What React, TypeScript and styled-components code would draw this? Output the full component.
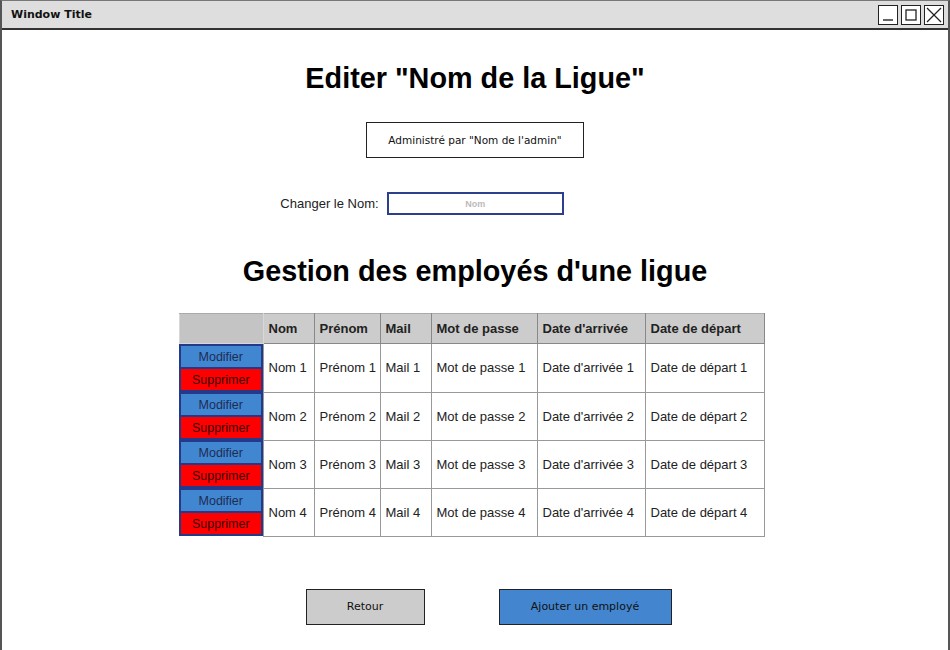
import React from "react";
import styled, { createGlobalStyle } from "styled-components";

const Global = createGlobalStyle`
  html, body { margin: 0; padding: 0; background: #fff; }
  body { font-family: "Liberation Sans", Arial, sans-serif; }
  * { box-sizing: border-box; }
`;

const Sketch = `"DejaVu Sans", "Liberation Sans", sans-serif`;

const Window = styled.div`
  width: 950px;
  height: 650px;
  border-left: 2px solid #555;
  border-right: 2px solid #555;
  border-top: 1px solid #777;
  display: flex;
  flex-direction: column;
  overflow: hidden;
`;

const TitleBar = styled.div`
  height: 29px;
  flex: none;
  background: #dedede;
  border-bottom: 2px solid #333;
  display: flex;
  align-items: center;
  justify-content: space-between;
  padding: 0 4px 0 9px;
`;

const TitleText = styled.span`
  font-family: ${Sketch};
  font-weight: bold;
  font-size: 11px;
  color: #111;
`;

const WinButtons = styled.div`
  display: flex;
  gap: 3px;
`;

const WinButton = styled.div`
  width: 20px;
  height: 20px;
  border: 1px solid #222;
  background: #fff;
  display: flex;
  align-items: center;
  justify-content: center;
`;

const Content = styled.div`
  flex: 1;
  display: flex;
  flex-direction: column;
  align-items: center;
`;

const Heading = styled.h1<{ $top: number }>`
  margin: ${(p) => p.$top}px 0 0;
  font-family: "Liberation Sans", Arial, sans-serif;
  font-weight: bold;
  font-size: 28.8px;
  line-height: 32px;
  color: #000;
`;

const AdminBox = styled.div`
  margin-top: 28px;
  width: 218px;
  height: 36px;
  border: 1px solid #222;
  display: flex;
  align-items: center;
  justify-content: center;
  font-family: ${Sketch};
  font-size: 10.5px;
  color: #111;
`;

const NameRow = styled.div`
  margin-top: 34px;
  display: flex;
  align-items: center;
  gap: 8px;
  margin-left: -106px;
`;

const Label = styled.span`
  font-size: 13px;
  color: #222;
`;

const NameInput = styled.div`
  width: 177px;
  height: 23px;
  border: 2px solid #2b3f8d;
  display: flex;
  align-items: center;
  justify-content: center;
  font-size: 9px;
  font-weight: bold;
  color: #bbb;
`;

const Table = styled.table`
  margin-top: 26px;
  margin-left: -7px;
  width: 585px;
  table-layout: fixed;
  border-collapse: collapse;
  font-family: "Liberation Sans", Arial, sans-serif;
  font-size: 13px;
  color: #222;
`;

const Th = styled.th<{ $w: number; $blank?: boolean }>`
  width: ${(p) => p.$w}px;
  height: 30px;
  padding: 0 3px 0 5px;
  text-align: left;
  font-weight: bold;
  white-space: nowrap;
  background: ${(p) => (p.$blank ? "#c4c4c4" : "#cccccc")};
  border: 1px solid ${(p) => (p.$blank ? "#d8d8d8" : "#888")};
  border-top: 1px solid #aaa;
`;

const Td = styled.td`
  height: 48px;
  padding: 0 3px 0 5px;
  border: 1px solid #999;
  white-space: nowrap;
  overflow: visible;
`;

const ActionTd = styled.td`
  padding: 0;
  height: 48px;
  border: none;
`;

const ActionStack = styled.div`
  display: flex;
  flex-direction: column;
  height: 48px;
  border: 2px solid #24398a;
  background: #24398a;
  gap: 2px;
`;

const ActionBtn = styled.div<{ $kind: "edit" | "delete" }>`
  flex: 1;
  display: flex;
  align-items: center;
  justify-content: center;
  font-size: 12.5px;
  color: ${(p) => (p.$kind === "edit" ? "#1d2d55" : "#3a0000")};
  background: ${(p) => (p.$kind === "edit" ? "#4186d0" : "#ff0000")};
`;

const Footer = styled.div`
  margin-top: 52px;
  display: flex;
  gap: 74px;
  margin-left: 27px;
`;

const FootButton = styled.div<{ $w: number; $primary?: boolean }>`
  width: ${(p) => p.$w}px;
  height: 36px;
  border: 1px solid #222;
  background: ${(p) => (p.$primary ? "#4386cf" : "#cccccc")};
  display: flex;
  align-items: center;
  justify-content: center;
  font-family: ${Sketch};
  font-size: 11px;
  color: #111;
`;

const cols: [string, number][] = [
  ["Nom", 51],
  ["Prénom", 66],
  ["Mail", 51],
  ["Mot de passe", 106],
  ["Date d'arrivée", 108],
  ["Date de départ", 119],
];

const rows = [1, 2, 3, 4];

export default function App() {
  return (
    <>
      <Global />
      <Window>
        <TitleBar>
          <TitleText>Window Title</TitleText>
          <WinButtons>
            <WinButton>
              <svg width="14" height="14" viewBox="0 0 14 14">
                <line x1="2" y1="12" x2="12" y2="12" stroke="#222" strokeWidth="1.4" />
              </svg>
            </WinButton>
            <WinButton>
              <svg width="14" height="14" viewBox="0 0 14 14">
                <rect x="2" y="2" width="10" height="10" fill="none" stroke="#222" strokeWidth="1.3" />
              </svg>
            </WinButton>
            <WinButton>
              <svg width="16" height="16" viewBox="0 0 16 16">
                <line x1="1" y1="1" x2="15" y2="15" stroke="#222" strokeWidth="1.3" />
                <line x1="15" y1="1" x2="1" y2="15" stroke="#222" strokeWidth="1.3" />
              </svg>
            </WinButton>
          </WinButtons>
        </TitleBar>
        <Content>
          <Heading $top={32}>Editer "Nom de la Ligue"</Heading>
          <AdminBox>Administré par "Nom de l'admin"</AdminBox>
          <NameRow>
            <Label>Changer le Nom:</Label>
            <NameInput>Nom</NameInput>
          </NameRow>
          <Heading $top={40}>Gestion des employés d'une ligue</Heading>
          <Table>
            <thead>
              <tr>
                <Th $w={84} $blank />
                {cols.map(([c, w]) => (
                  <Th key={c} $w={w}>{c}</Th>
                ))}
              </tr>
            </thead>
            <tbody>
              {rows.map((n) => (
                <tr key={n}>
                  <ActionTd>
                    <ActionStack>
                      <ActionBtn $kind="edit">Modifier</ActionBtn>
                      <ActionBtn $kind="delete">Supprimer</ActionBtn>
                    </ActionStack>
                  </ActionTd>
                  {cols.map(([c]) => (
                    <Td key={c}>{`${c} ${n}`}</Td>
                  ))}
                </tr>
              ))}
            </tbody>
          </Table>
          <Footer>
            <FootButton $w={119}>Retour</FootButton>
            <FootButton $w={173} $primary>Ajouter un employé</FootButton>
          </Footer>
        </Content>
      </Window>
    </>
  );
}
